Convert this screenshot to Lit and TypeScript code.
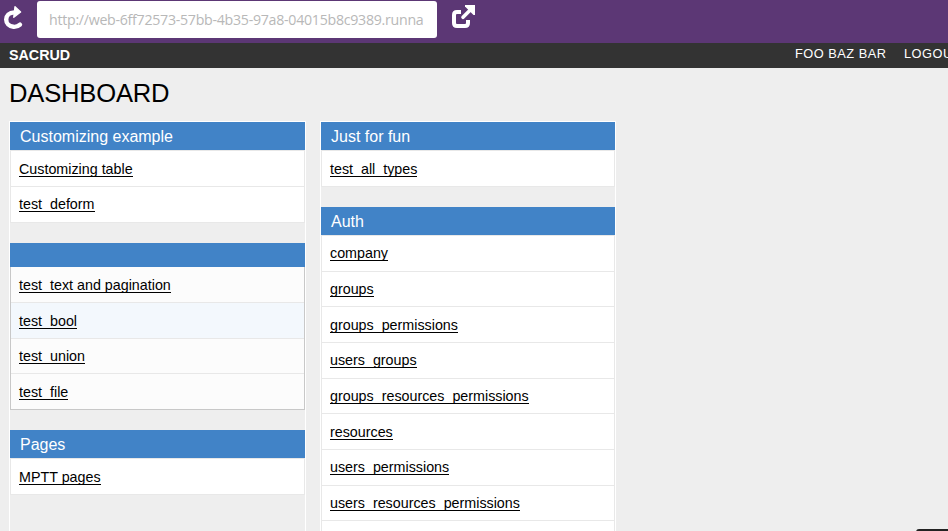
import { LitElement, html, css } from "lit";
import { customElement, property } from "lit/decorators.js";
import { classMap } from "lit/directives/class-map.js";

interface Group {
  title: string;
  active?: boolean;
  items: string[];
}

const COLUMNS: Group[][] = [
  [
    { title: "Customizing example", items: ["Customizing table", "test_deform"] },
    { title: "", active: true, items: ["test_text and pagination", "test_bool", "test_union", "test_file"] },
    { title: "Pages", items: ["MPTT pages"] },
  ],
  [
    { title: "Just for fun", items: ["test_all_types"] },
    {
      title: "Auth",
      items: ["company", "groups", "groups_permissions", "users_groups", "groups_resources_permissions",
        "resources", "users_permissions", "users_resources_permissions", ""],
    },
  ],
];

@customElement("model-group")
class ModelGroup extends LitElement {
  @property({ attribute: false }) group!: Group;

  static styles = css`
    :host { display: block; margin-bottom: 20.5px; }
    .head {
      height: 28px; line-height: 29px; padding-left: 10px;
      background: #4183c7; color: #fff; font-size: 16px;
    }
    .head.empty { height: 24.4px; }
    .list { margin: 0; padding: 0; list-style: none; background: #fff; border: 1px solid #e8e8e8; border-bottom: 0; }
    .list.active { background: #fcfcfc; border-color: #c8c8c8; border-top: 0; margin-bottom: -.25px; }
    .row {
      box-sizing: border-box; height: 35.67px; padding: 9.5px 0 0 8px;
      border-bottom: 1px solid #e8e8e8; font-size: 14.3px; line-height: 17px;
    }
    .long .row { padding-top: 9.3px; }
    .active .row:last-child { border-bottom-color: #c8c8c8; }
    .row.hover { background: #f3f8fd; }
    .link { display: inline-block; height: 15px; color: #000; text-decoration: none; border-bottom: 1px solid #000; }
  `;

  render() {
    const { title, active, items } = this.group;
    return html`
      <div class=${classMap({ head: true, empty: !title })}>${title}</div>
      <ul class=${classMap({ list: true, active: !!active, long: items.length > 5 })}>
        ${items.map((name) => html`
          <li class=${classMap({ row: true, hover: name === "test_bool" })}><a class="link">${name}</a></li>`)}
      </ul>`;
  }
}

@customElement("app-root")
class AppRoot extends LitElement {
  static styles = css`
    :host {
      display: block; position: relative; height: 531px; overflow: hidden;
      background: #eee; color: #000; font-family: "Liberation Sans", Arial, sans-serif;
    }
    .browser { display: flex; height: 43px; background: #5c3775; }
    .reload { width: 22px; height: 26px; margin: 5px 0 0 3px; }
    .url {
      box-sizing: border-box; width: 400px; height: 37px; margin: 1px 0 0 12px; padding: 0 12px;
      border-radius: 3px; background: #fff; color: #b8b8b8; letter-spacing: -.28px;
      font: 400 14.2px/37px "Open Sans", "Noto Sans", sans-serif; white-space: nowrap;
    }
    .open { width: 24px; height: 24px; margin: 5px 0 0 15px; }
    .bar { display: flex; height: 25px; background: #333; color: #fff; white-space: nowrap; }
    .brand { width: 786px; flex: none; padding-left: 9px; font-size: 14.3px; font-weight: bold; line-height: 25px; }
    .nav { display: flex; gap: 17.4px; font-size: 12.8px; letter-spacing: .5px; line-height: 22px; }
    .title { margin: 0 0 0 9px; height: 53px; line-height: 51px; font-size: 25.6px; font-weight: normal; letter-spacing: -.2px; }
    .columns { display: flex; gap: 14px; margin-left: 9px; }
    .column { box-sizing: border-box; width: 297px; height: 480px; border: 1px solid #fff; padding-top: .2px; }
    .column.second { width: 296px; padding-top: 0; }
    .toolbar { position: absolute; left: 916px; top: 529px; width: 40px; height: 10px; background: #222; border-radius: 3px 0 0; }
  `;

  render() {
    return html`
      <div class="browser">
        <svg class="reload" viewBox="0 0 22 26" fill="none" stroke="#fff" stroke-linecap="round" stroke-linejoin="round">
          <path d="M17 19.6C15 21.4 12.8 22 10.4 21.8C6.2 21.4 3.2 18.4 3.2 14.6C3.2 10.8 6 7.6 11.5 7.4" stroke-width="4.4" />
          <path d="M12 1.8L17.6 7L10.8 12.2Z" fill="#fff" stroke-width="1.4" />
        </svg>
        <div class="url">http://web-6ff72573-57bb-4b35-97a8-04015b8c9389.runna</div>
        <svg class="open" viewBox="0 0 24 24" fill="none" stroke="#fff">
          <path d="M9 7H5Q2 7 2 10V18Q2 21 5 21H13Q16 21 16 18V15" stroke-width="4" />
          <path d="M11 12.3L19 4.3" stroke-width="3.6" stroke-linecap="round" />
          <path d="M13 0H23V10H21.5L13 1.5Z" fill="#fff" stroke="none" />
        </svg>
      </div>
      <div class="bar">
        <div class="brand">SACRUD</div>
        <div class="nav"><span>FOO BAZ BAR</span><span>LOGOUT</span></div>
      </div>
      <h1 class="title">DASHBOARD</h1>
      <div class="columns">
        ${COLUMNS.map((groups, i) => html`
          <div class=${classMap({ column: true, second: i === 1 })}>
            ${groups.map((g) => html`<model-group .group=${g}></model-group>`)}
          </div>`)}
      </div>
      <div class="toolbar"></div>`;
  }
}
